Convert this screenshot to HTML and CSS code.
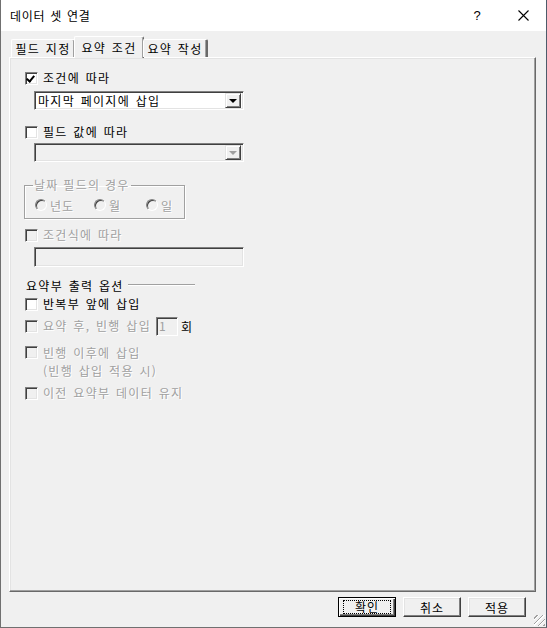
FILE: index.html
```html
<!DOCTYPE html>
<html lang="ko">
  <head>
    <meta charset="UTF-8" />
    <title>데이터 셋 연결</title>
    <link rel="stylesheet" href="styles.css">
  </head>
  <body>
    <div class="window">
      <div class="titlebar">
        <div class="title">데이터 셋 연결</div>
        <div class="help">?</div>
        <div class="close">
          <svg width="11" height="11" viewBox="0 0 11 11">
            <path d="M0.5 0.5 L10.5 10.5 M10.5 0.5 L0.5 10.5" stroke="#000" stroke-width="1.1" fill="none" />
          </svg>
        </div>
      </div>

      <div class="body">
        <div class="tabs">
          <div class="tab first">필드 지정</div>
          <div class="tab active">요약 조건</div>
          <div class="tab last">요약 작성</div>
        </div>

        <div class="panel">
          <div class="row">
            <span class="cb checked"></span>
            <span class="label">조건에 따라</span>
          </div>
          <div class="select">
            <span class="select-text">마지막 페이지에 삽입</span>
            <span class="select-btn"><span class="arrow"></span></span>
          </div>

          <div class="row gap-top">
            <span class="cb"></span>
            <span class="label">필드 값에 따라</span>
          </div>
          <div class="select disabled">
            <span class="select-text"></span>
            <span class="select-btn"><span class="arrow"></span></span>
          </div>

          <fieldset class="group">
            <legend class="dim">날짜 필드의 경우</legend>
            <div class="radios">
              <div class="radio-item w1"><span class="radio"></span><span class="dim">년도</span></div>
              <div class="radio-item w2"><span class="radio"></span><span class="dim">월</span></div>
              <div class="radio-item"><span class="radio"></span><span class="dim">일</span></div>
            </div>
          </fieldset>

          <div class="row row-expr">
            <span class="cb disabled"></span>
            <span class="label dim">조건식에 따라</span>
          </div>
          <div class="textbox"></div>

          <div class="section">
            <span class="section-title">요약부 출력 옵션</span>
            <span class="section-line"></span>
          </div>

          <div class="row r1">
            <span class="cb"></span>
            <span class="label">반복부 앞에 삽입</span>
          </div>
          <div class="row r2">
            <span class="cb disabled"></span>
            <span class="label dim">요약 후, 빈행 삽입</span>
            <span class="num">1</span>
            <span class="unit">회</span>
          </div>
          <div class="row r3 top">
            <span class="cb disabled"></span>
            <span class="label dim">빈행 이후에 삽입<br />(빈행 삽입 적용 시)</span>
          </div>
          <div class="row r4">
            <span class="cb disabled"></span>
            <span class="label dim">이전 요약부 데이터 유지</span>
          </div>
        </div>

        <div class="buttons">
          <button class="btn default"><span class="focus">확인</span></button>
          <button class="btn">취소</button>
          <button class="btn">적용</button>
        </div>
      </div>
      <div class="grip"></div>
    </div>
  </body>
</html>
```

FILE: styles.css
```css
* {
  margin: 0;
  padding: 0;
  box-sizing: border-box;
}

body {
  font-family: "Noto Sans CJK KR", "Noto Sans", sans-serif;
  font-size: 12px;
  color: #000;
  background: #f0f0f0;
}

.window {
  position: relative;
  width: 547px;
  height: 628px;
  background: #f0f0f0;
  border-left: 1px solid #707070;
  border-right: 1px solid #4d5b6a;
  border-bottom: 1px solid #707070;
  display: flex;
  flex-direction: column;
}

.titlebar {
  height: 31px;
  background: #fff;
  display: flex;
  align-items: center;
  padding-left: 9px;
}

.title {
  flex: 1;
  letter-spacing: 0.7px;
  word-spacing: 1px;
}

.help {
  width: 46px;
  text-align: center;
  font-family: "Liberation Sans", sans-serif;
  font-size: 13px;
}

.close {
  width: 46px;
  display: flex;
  justify-content: center;
  align-items: center;
}

.body {
  flex: 1;
  display: flex;
  flex-direction: column;
  padding: 5px 10px 0 8px;
}

.tabs {
  display: flex;
  align-items: flex-end;
  height: 21px;
  padding-left: 2px;
  position: relative;
  z-index: 2;
}

.tab {
  height: 18px;
  border-top: 1px solid #fff;
  border-left: 1px solid #fff;
  border-right: 1px solid #696969;
  box-shadow: inset -1px 0 0 #a0a0a0;
  border-radius: 2px 2px 0 0;
  display: flex;
  align-items: center;
  justify-content: center;
  letter-spacing: 1.3px;
  word-spacing: 1px;
  white-space: nowrap;
}

.tab.first {
  width: 64px;
}

.tab.active {
  width: 70px;
  height: 22px;
  margin-bottom: -1px;
  background: #f0f0f0;
  margin-left: -1px;
  margin-right: -1px;
}

.tab.last {
  width: 65px;
  border-right-width: 2px;
}

.panel {
  height: 535px;
  background: #f0f0f0;
  border-top: 1px solid #fff;
  border-left: 1px solid #fff;
  border-right: 1px solid #696969;
  border-bottom: 1px solid #696969;
  box-shadow: inset -1px -1px 0 #a0a0a0, inset 1px 1px 0 #e3e3e3;
  padding: 11px 0 0 15px;
  position: relative;
  z-index: 1;
}

.row {
  display: flex;
  align-items: center;
  height: 18px;
}

.row.top {
  align-items: flex-start;
  height: auto;
}

.label {
  margin-left: 5px;
  letter-spacing: 1.3px;
  word-spacing: 1px;
  line-height: 18px;
}

.dim {
  color: #a0a0a0;
  text-shadow: 1px 1px 0 #fff;
}

.cb {
  width: 13px;
  height: 13px;
  flex-shrink: 0;
  background: #fff;
  border: 1px solid;
  border-color: #808080 #fff #fff #808080;
  box-shadow: inset 1px 1px 0 #404040, inset -1px -1px 0 #e3e3e3;
  position: relative;
}

.row.top .cb {
  margin-top: 2px;
}

.cb.disabled {
  background: #f0f0f0;
}

.cb.checked::after {
  content: "";
  position: absolute;
  left: 2px;
  top: 1px;
  width: 3px;
  height: 6px;
  border-right: 2px solid #000;
  border-bottom: 2px solid #000;
  transform: rotate(40deg);
}

.select {
  margin: 4px 0 0 9px;
  width: 210px;
  height: 19px;
  background: #fff;
  border: 1px solid;
  border-color: #808080 #fff #fff #808080;
  box-shadow: inset 1px 1px 0 #404040, inset -1px -1px 0 #e3e3e3;
  display: flex;
  align-items: center;
  padding: 2px;
}

.select.disabled {
  background: #f0f0f0;
  margin-top: 2px;
}

.select-text {
  flex: 1;
  padding-left: 1px;
  letter-spacing: 1.3px;
  word-spacing: 1px;
  line-height: 15px;
}

.select-btn {
  width: 16px;
  height: 15px;
  background: #f0f0f0;
  border: 1px solid;
  border-color: #e3e3e3 #404040 #404040 #e3e3e3;
  box-shadow: inset 1px 1px 0 #fff, inset -1px -1px 0 #808080;
  display: flex;
  align-items: center;
  justify-content: center;
}

.arrow {
  width: 0;
  height: 0;
  border-left: 4px solid transparent;
  border-right: 4px solid transparent;
  border-top: 4px solid #000;
  margin-top: 1px;
}

.disabled .arrow {
  border-top-color: #a0a0a0;
}

.gap-top {
  margin-top: 13px;
}

.group {
  margin: 16px 0 0 -1px;
  width: 161px;
  height: 41px;
  border: 1px solid #a0a0a0;
  box-shadow: 1px 1px 0 #fff, inset 1px 1px 0 #fff;
  padding: 0 0 0 10px;
}

.group legend {
  padding: 0 1px;
  margin-left: -2px;
  letter-spacing: 1.3px;
  line-height: 14px;
}

.radios {
  display: flex;
  align-items: center;
  height: 20px;
  margin-top: 3px;
}

.radio-item {
  display: flex;
  align-items: center;
  gap: 3px;
  letter-spacing: 1px;
}

.radio-item.w1 {
  width: 59px;
}

.radio-item.w2 {
  width: 52px;
}

.radio {
  width: 12px;
  height: 12px;
  border-radius: 50%;
  border: 1px solid;
  border-color: #808080 #fff #fff #808080;
  box-shadow: inset 1px 1px 0 #404040;
  background: #f0f0f0;
}

.row-expr {
  margin-top: 7px;
}

.textbox {
  margin: 3px 0 0 9px;
  width: 210px;
  height: 20px;
  background: #f0f0f0;
  border: 1px solid;
  border-color: #808080 #fff #fff #808080;
  box-shadow: inset 1px 1px 0 #404040, inset -1px -1px 0 #e3e3e3;
}

.section {
  display: flex;
  align-items: center;
  height: 18px;
  margin-top: 9px;
  padding-left: 1px;
}

.section-title {
  letter-spacing: 1.3px;
  word-spacing: 1px;
}

.section-line {
  margin-left: 4px;
  width: 67px;
  height: 2px;
  border-top: 1px solid #a0a0a0;
  border-bottom: 1px solid #fff;
}

.r1 {
  margin-top: 1px;
}

.r2 {
  margin-top: 4px;
}

.num {
  margin-left: 5px;
  width: 22px;
  height: 19px;
  border: 1px solid;
  border-color: #808080 #fff #fff #808080;
  box-shadow: inset 1px 1px 0 #404040;
  color: #a0a0a0;
  padding-left: 2px;
  line-height: 16px;
}

.unit {
  margin-left: 3px;
}

.r3 {
  margin-top: 9px;
}

.r4 {
  margin-top: 4px;
}

.buttons {
  display: flex;
  justify-content: flex-end;
  gap: 7px;
  padding: 5px 10px 0 0;
}

.btn {
  width: 58px;
  height: 20px;
  font-family: inherit;
  font-size: 12px;
  letter-spacing: 1px;
  background: #f0f0f0;
  border: 1px solid;
  border-color: #fff #404040 #404040 #fff;
  box-shadow: inset -1px -1px 0 #808080, inset 1px 1px 0 #e3e3e3;
  display: flex;
  align-items: center;
  justify-content: center;
}

.btn.default {
  border: 1px solid #000;
  box-shadow: inset 1px 1px 0 #fff, inset -1px -1px 0 #404040, inset -2px -2px 0 #808080;
}

.focus {
  display: block;
  width: 48px;
  height: 14px;
  border: 1px dotted #000;
  line-height: 12px;
  text-align: center;
}

.grip {
  position: absolute;
  right: 1px;
  bottom: 1px;
  width: 11px;
  height: 11px;
  background: repeating-linear-gradient(135deg, transparent 0 2px, #a0a0a0 2px 3px, #fff 3px 4px);
}
```
